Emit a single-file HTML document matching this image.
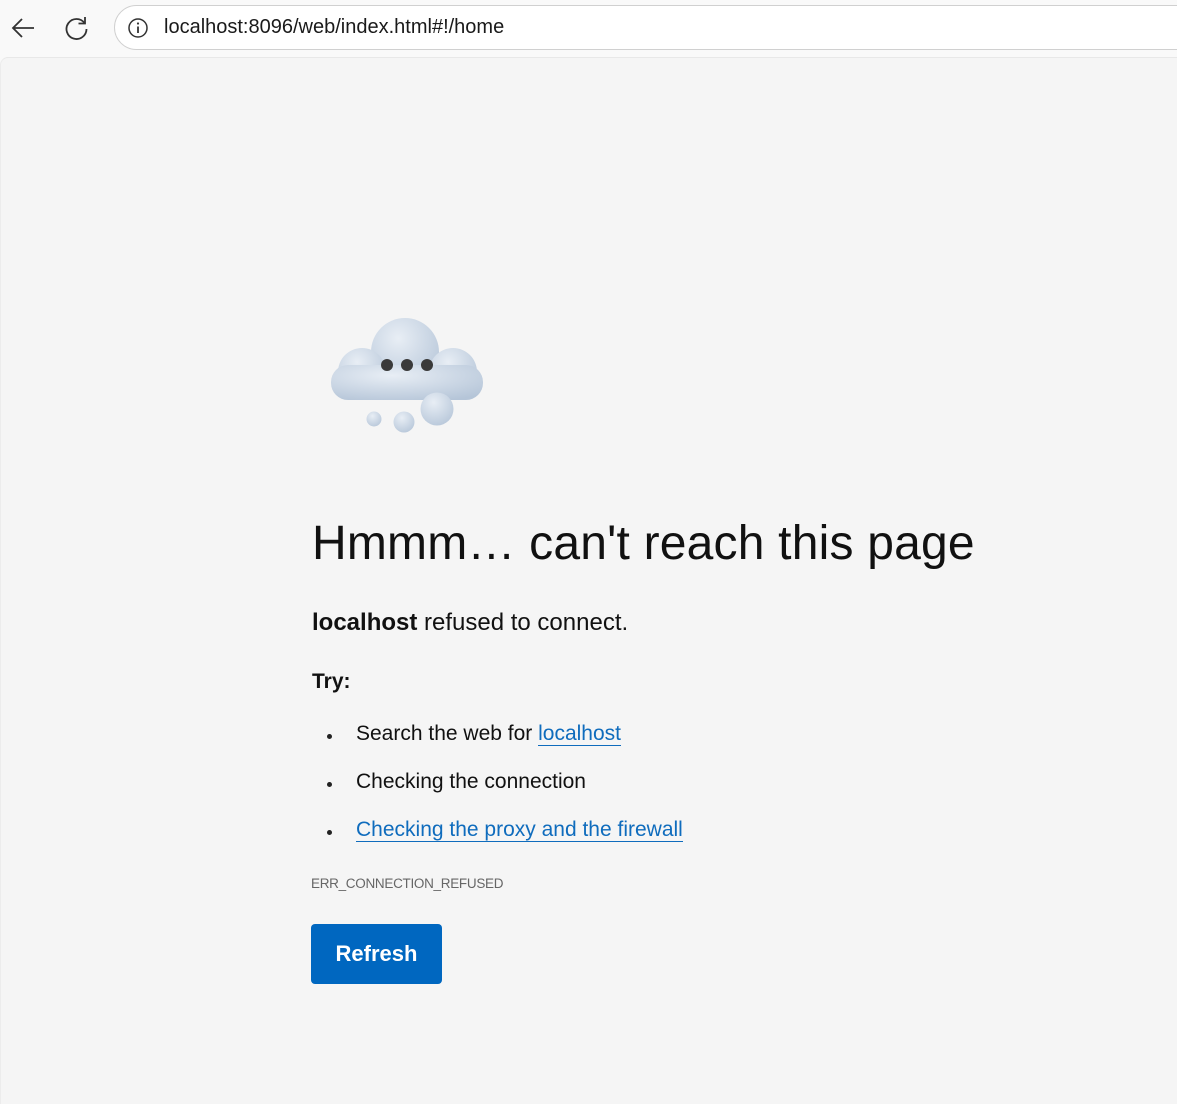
<!DOCTYPE html>
<html><head><meta charset="utf-8"><style>
html,body{margin:0;padding:0;width:1177px;height:1104px;overflow:hidden;background:#f9f9f9;font-family:"Liberation Sans",sans-serif;}
.bar{position:absolute;left:0;top:0;width:1177px;height:58px;background:#f9f9f9;}
.url{position:absolute;left:114px;top:5px;width:1100px;height:45px;border:1px solid #d0d0d0;border-radius:24px;background:#fff;box-sizing:border-box;}
.url span{position:absolute;left:49px;top:10px;font-size:20px;color:#1a1a1a;}
.page{position:absolute;left:0;top:57px;width:1177px;height:1047px;background:#f5f5f5;border-top:1px solid #e8e8e8;border-left:1px solid #ececec;border-top-left-radius:8px;box-sizing:border-box;}
.t{position:absolute;left:312px;color:#111;white-space:nowrap;}
a{color:#0f6cbd;text-decoration:none;border-bottom:1px solid #0f6cbd;}
.dot{position:absolute;left:327px;width:5px;height:5px;border-radius:50%;background:#222;}
.btn{position:absolute;left:311px;top:924px;width:131px;height:60px;background:#0067c0;border-radius:4px;color:#fff;font-weight:bold;font-size:22px;text-align:center;line-height:60px;}
</style></head><body>
<div class="bar">
<svg style="position:absolute;left:10px;top:16px" width="26" height="24" viewBox="0 0 26 24"><path d="M24 12H3M12 3L3 12L12 21" stroke="#333" stroke-width="1.8" fill="none"/></svg>
<svg style="position:absolute;left:64px;top:15px" width="26" height="26" viewBox="0 0 26 26"><path d="M20.5 8A10 10 0 1 0 22.5 14" stroke="#333" stroke-width="1.8" fill="none"/><path d="M21 2V8.5H14.5" stroke="#333" stroke-width="1.8" fill="none"/></svg>
<div class="url">
<svg style="position:absolute;left:12px;top:11px" width="22" height="22" viewBox="0 0 22 22"><circle cx="11" cy="11" r="9" stroke="#333" stroke-width="1.5" fill="none"/><path d="M11 9.5V16" stroke="#333" stroke-width="1.8"/><circle cx="11" cy="6.5" r="1.1" fill="#333"/></svg>
<span>localhost:8096/web/index.html#!/home</span></div>
</div>
<div class="page"></div>
<svg style="position:absolute;left:320px;top:310px" width="180" height="130" viewBox="320 310 180 130">
<defs><radialGradient id="g" cx="0.4" cy="0.3" r="0.8"><stop offset="0" stop-color="#e8eef5"/><stop offset="1" stop-color="#b5c5d8"/></radialGradient></defs>
<g fill="url(#g)">
<circle cx="405" cy="352" r="34"/><circle cx="362" cy="372" r="24"/><circle cx="453" cy="372" r="24"/>
<rect x="331" y="365" width="152" height="35" rx="17"/>
<circle cx="374" cy="419" r="7.5"/><circle cx="404" cy="422" r="10.5"/><circle cx="437" cy="409" r="16.5"/>
</g>
<circle cx="387" cy="365" r="6" fill="#3a3a3a"/><circle cx="407" cy="365" r="6" fill="#3a3a3a"/><circle cx="427" cy="365" r="6" fill="#3a3a3a"/>
</svg>
<div class="t" style="top:516px;font-size:48px;letter-spacing:0.2px;">Hmmm… can't reach this page</div>
<div class="t" style="top:609px;font-size:24px;"><b>localhost</b> refused to connect.</div>
<div class="t" style="top:670px;font-size:21px;font-weight:bold;">Try:</div>
<div class="dot" style="top:734px"></div><div class="t" style="left:356px;top:722px;font-size:21px;">Search the web for <a>localhost</a></div>
<div class="dot" style="top:782px"></div><div class="t" style="left:356px;top:770px;font-size:21px;">Checking the connection</div>
<div class="dot" style="top:830px"></div><div class="t" style="left:356px;top:818px;font-size:21px;"><a>Checking the proxy and the firewall</a></div>
<div class="t" style="left:311px;top:876px;font-size:13.5px;color:#666;letter-spacing:-0.3px;">ERR_CONNECTION_REFUSED</div>
<div class="btn">Refresh</div>
</body></html>
